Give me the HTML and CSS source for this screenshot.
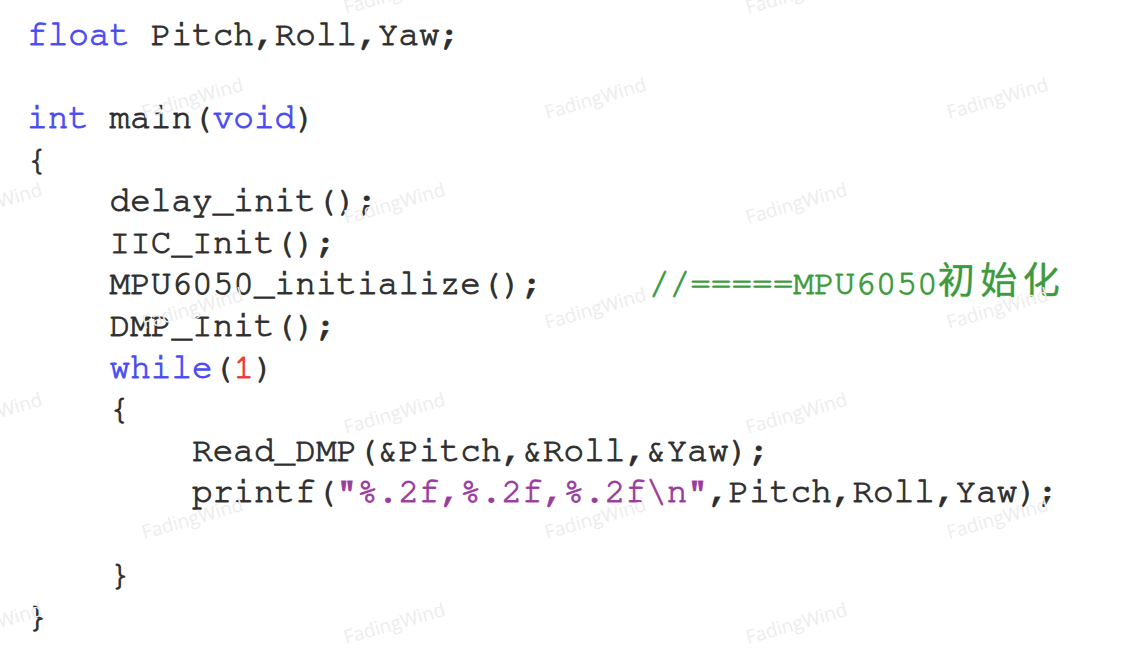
FILE: index.html
```html
<!DOCTYPE html>
<html lang="zh">
<head>
<meta charset="utf-8">
<title>MPU6050 code</title>
<link rel="stylesheet" href="styles.css">
</head>
<body>
<main class="page">
  <div class="code">
    <div class="line"><span class="kw">float</span> Pitch,Roll,Yaw;</div>
    <div class="line"></div>
    <div class="line"><span class="kw">int</span> main(<span class="kw">void</span>)</div>
    <div class="line">{</div>
    <div class="line">    delay_init();</div>
    <div class="line">    IIC_Init();</div>
    <div class="line">    MPU6050_initialize();<span class="cm">//=====MPU6050<span class="cjk">初始化</span></span></div>
    <div class="line">    DMP_Init();</div>
    <div class="line">    <span class="kw">while</span>(<span class="num">1</span>)</div>
    <div class="line">    {</div>
    <div class="line">        Read_DMP(&amp;Pitch,&amp;Roll,&amp;Yaw);</div>
    <div class="line">        printf(<span class="str">"%.2f,%.2f,%.2f\n"</span>,Pitch,Roll,Yaw);</div>
    <div class="line"></div>
    <div class="line">    }</div>
    <div class="line">}</div>
  </div>
  <div class="watermarks" aria-hidden="true">
    <div class="wm-row wm-a"><span>FadingWind</span><span>FadingWind</span><span>FadingWind</span><span>FadingWind</span></div>
    <div class="wm-row wm-b"><span>FadingWind</span><span>FadingWind</span><span>FadingWind</span><span>FadingWind</span></div>
    <div class="wm-row wm-a"><span>FadingWind</span><span>FadingWind</span><span>FadingWind</span><span>FadingWind</span></div>
    <div class="wm-row wm-b"><span>FadingWind</span><span>FadingWind</span><span>FadingWind</span><span>FadingWind</span></div>
    <div class="wm-row wm-a"><span>FadingWind</span><span>FadingWind</span><span>FadingWind</span><span>FadingWind</span></div>
    <div class="wm-row wm-b"><span>FadingWind</span><span>FadingWind</span><span>FadingWind</span><span>FadingWind</span></div>
    <div class="wm-row wm-a"><span>FadingWind</span><span>FadingWind</span><span>FadingWind</span><span>FadingWind</span></div>
  </div>
</main>
</body>
</html>
```
FILE: styles.css
```css
* { box-sizing: border-box; }
html, body {
  margin: 0;
  padding: 0;
  background: #ffffff;
}
.page {
  position: relative;
  width: 1122px;
  height: 648px;
  overflow: hidden;
  background: #ffffff;
}
.code {
  padding: 14px 0 0 27px;
  font-family: "Nimbus Mono PS", "Nimbus Mono L", "FreeMono", "Courier", "Liberation Mono", "Noto Sans CJK SC", monospace;
  font-size: 34.4px;
  color: #2e2e2e;
  -webkit-text-stroke: 1px rgba(46, 46, 46, 0.85);
  text-shadow: 0 0 1px rgba(40, 40, 40, 0.6);
}
.line {
  height: 41.57px;
  line-height: 41.57px;
  white-space: pre;
}
.kw {
  color: #4b4bf2;
  -webkit-text-stroke: 1px rgba(75, 75, 242, 0.85);
  text-shadow: 0 0 1px rgba(75, 75, 242, 0.6);
}
.num {
  color: #e63b3b;
  -webkit-text-stroke: 1px rgba(230, 59, 59, 0.85);
  text-shadow: 0 0 1px rgba(230, 59, 59, 0.5);
}
.str {
  color: #9a3c9e;
  -webkit-text-stroke: 1px rgba(154, 60, 158, 0.85);
  text-shadow: 0 0 1px rgba(154, 60, 158, 0.5);
}
.cm {
  color: #3e9a3e;
  margin-left: 106px;
  -webkit-text-stroke: 1px rgba(62, 154, 62, 0.85);
  text-shadow: 0 0 1px rgba(62, 154, 62, 0.5);
}
.cjk {
  font-family: "Noto Sans CJK SC", sans-serif;
  font-size: 37px;
  line-height: 0;
  letter-spacing: 5.5px;
  -webkit-text-stroke: 0.3px rgba(62, 154, 62, 0.6);
}
.watermarks {
  position: absolute;
  inset: 0;
  display: flex;
  flex-direction: column;
  margin-top: -60px;
  pointer-events: none;
}
.wm-row {
  display: flex;
  flex: 0 0 auto;
  height: 105px;
  align-items: center;
}
.wm-a { margin-left: -210px; }
.wm-b { margin-left: -9px; }
.wm-row span {
  flex: 0 0 402.5px;
  text-align: center;
  font-family: "Open Sans", "Noto Sans", sans-serif;
  font-size: 19px;
  color: #ededed;
  transform: rotate(-16deg);
  white-space: nowrap;
}
```
